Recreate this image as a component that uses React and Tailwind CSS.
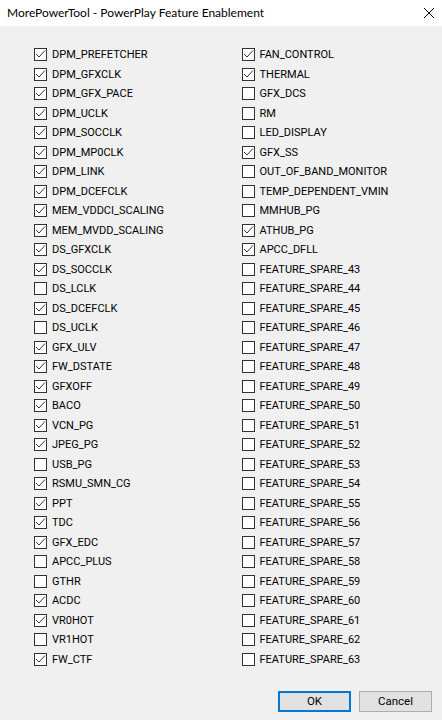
import React from "react";

const left = [
  ["DPM_PREFETCHER", 1], ["DPM_GFXCLK", 1], ["DPM_GFX_PACE", 1], ["DPM_UCLK", 1],
  ["DPM_SOCCLK", 1], ["DPM_MP0CLK", 1], ["DPM_LINK", 1], ["DPM_DCEFCLK", 1],
  ["MEM_VDDCI_SCALING", 1], ["MEM_MVDD_SCALING", 1], ["DS_GFXCLK", 1], ["DS_SOCCLK", 1],
  ["DS_LCLK", 0], ["DS_DCEFCLK", 1], ["DS_UCLK", 0], ["GFX_ULV", 1],
  ["FW_DSTATE", 1], ["GFXOFF", 1], ["BACO", 1], ["VCN_PG", 1],
  ["JPEG_PG", 1], ["USB_PG", 0], ["RSMU_SMN_CG", 1], ["PPT", 1],
  ["TDC", 1], ["GFX_EDC", 1], ["APCC_PLUS", 0], ["GTHR", 0],
  ["ACDC", 1], ["VR0HOT", 1], ["VR1HOT", 0], ["FW_CTF", 1],
];

const right = [
  ["FAN_CONTROL", 1], ["THERMAL", 1], ["GFX_DCS", 0], ["RM", 0],
  ["LED_DISPLAY", 0], ["GFX_SS", 1], ["OUT_OF_BAND_MONITOR", 0], ["TEMP_DEPENDENT_VMIN", 0],
  ["MMHUB_PG", 0], ["ATHUB_PG", 1], ["APCC_DFLL", 1],
];
for (let i = 43; i <= 63; i++) right.push(["FEATURE_SPARE_" + i, 0]);

// win10 style checkbox + label
const CheckRow = ({ label, checked }) => (
  <div className="flex items-center h-[19.5px]">
    <div className="w-[13px] h-[13px] border border-[#333333] bg-white flex items-center justify-center shrink-0">
      {checked ? (
        <svg width="11" height="11" viewBox="0 0 11 11">
          <polyline points="1,5 4,8 10,1.5" fill="none" stroke="#333333" strokeWidth="1" />
        </svg>
      ) : null}
    </div>
    <span className="ml-[5px] text-[11px] text-black leading-none">{label}</span>
  </div>
);

export default function App() {
  return (
    <div className="w-[442px] h-[720px] bg-[#f0f0f0] flex flex-col font-[Roboto,sans-serif]">
      {/* title bar */}
      <div className="h-[26px] bg-white flex items-center justify-between pl-[7px] pr-[7px]">
        <span className="text-[12px] text-black font-[Lato,sans-serif]">MorePowerTool - PowerPlay Feature Enablement</span>
        <svg width="12" height="12" viewBox="0 0 12 12">
          <path d="M1 1 L11 11 M11 1 L1 11" stroke="#000" strokeWidth="1" />
        </svg>
      </div>

      <div className="flex pt-[19px] pl-[34px]">
        <div className="w-[207.5px] flex flex-col">
          {left.map(([l, c]) => <CheckRow key={l} label={l} checked={c} />)}
        </div>
        <div className="flex flex-col">
          {right.map(([l, c]) => <CheckRow key={l} label={l} checked={c} />)}
        </div>
      </div>

      <div className="flex justify-end gap-[8px] pr-[10px] mt-[22px]">
        <button className="w-[73px] h-[21px] bg-[#e1e1e1] border-2 border-[#0078d7] text-[11.5px] text-black leading-none">OK</button>
        <button className="w-[73px] h-[21px] bg-[#e1e1e1] border border-[#adadad] text-[11.5px] text-black leading-none">Cancel</button>
      </div>
    </div>
  );
}
